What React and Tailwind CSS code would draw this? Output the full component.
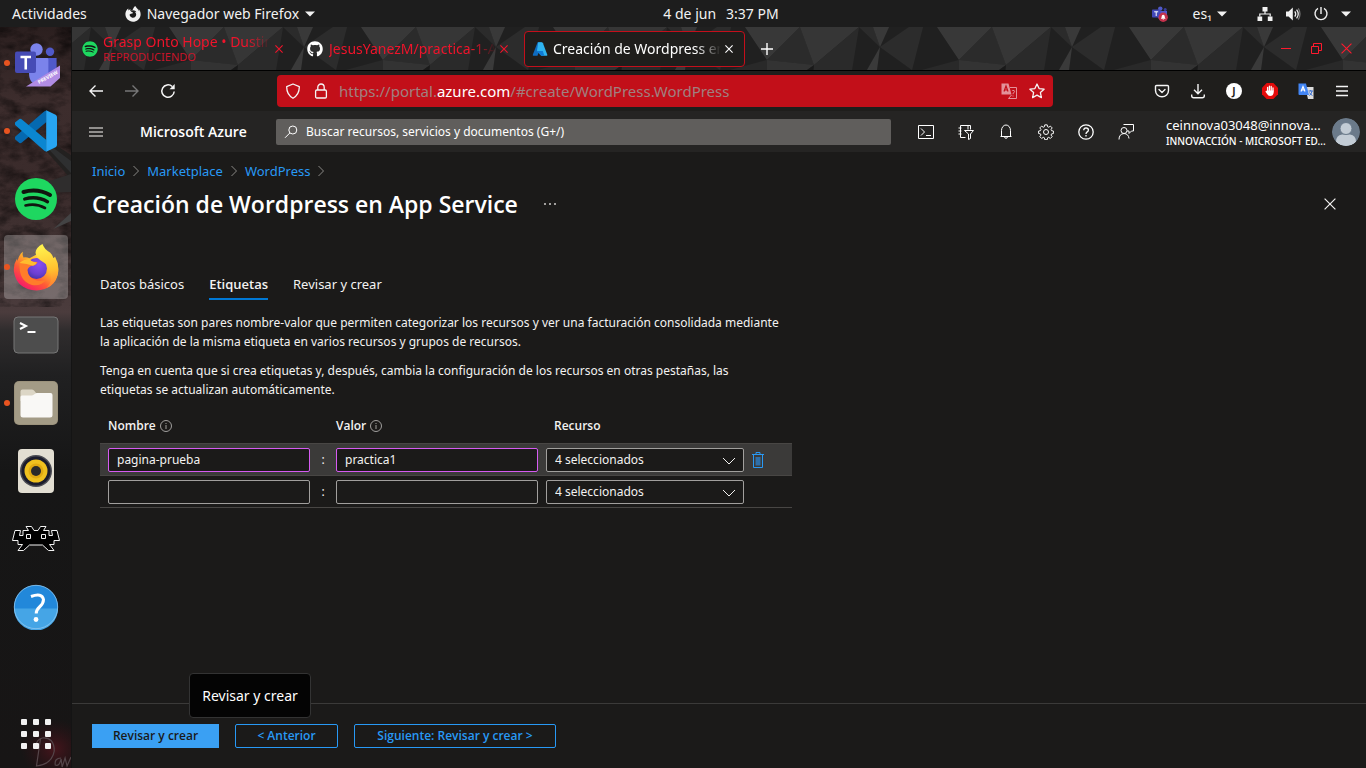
import React from "react";
import { FaFirefoxBrowser, FaGithub, FaSpotify } from "react-icons/fa";

/* ---------- small shared drawings ---------- */

function Svg({ w = 16, h = w, box, className = "", children, ...rest }) {
  return (
    <svg
      width={w}
      height={h}
      viewBox={box || `0 0 ${w} ${h}`}
      fill="none"
      stroke="currentColor"
      aria-hidden="true"
      className={`shrink-0 ${className}`}
      {...rest}
    >
      {children}
    </svg>
  );
}

const Caret = () => (
  <Svg w={10} h={6}>
    <path d="M0 0.5h10L5 5.5z" fill="currentColor" stroke="none" />
  </Svg>
);

const Cross = ({ size = 8, width = 1.1 }) => (
  <Svg w={size} box="0 0 8 8" strokeWidth={width}>
    <path d="M0.4 0.4l7.2 7.2M7.6 0.4L0.4 7.6" />
  </Svg>
);

const AzureLogo = () => (
  <Svg w={16} stroke="none">
    <path d="M5.6 1.2h4.1L5.5 14.8H1.4q-.9-.2-.6-1.1z" fill="#0f6cc0" />
    <path d="M9.6 1.2H6.2L5 9.4l4.5 5.4h5.3q.7-.2.5-1L11 2.2q-.4-1-1.4-1z" fill="#2fb4f0" />
    <path d="M4.5 10h6.3l1.5 4.8H9z" fill="#0f7bd6" />
  </Svg>
);

/* ---------- desktop top bar ---------- */

function TopBar() {
  return (
    <header className="grid h-[27px] shrink-0 grid-cols-[1fr_auto_1fr] items-center bg-[#1d1d1d] text-[14px] leading-5 text-[#f2f2f2]">
      <div className="flex items-center">
        <button className="ml-3">Actividades</button>
        <button className="ml-[38px] flex items-center gap-[6px]">
          <FaFirefoxBrowser size={16} />
          Navegador web Firefox
          <Caret />
        </button>
      </div>
      <button className="flex gap-[10px] pl-[76px]">
        <span>4 de jun</span>
        <span>3:37 PM</span>
      </button>
      <div className="flex items-center justify-end pr-[15px]">
        <button aria-label="Teams" className="mr-6">
          <Svg w={16} stroke="none">
            <circle cx="8.3" cy="2.6" r="2.2" fill="#5059c9" />
            <circle cx="13.2" cy="3.4" r="1.5" fill="#3a3f9e" />
            <path d="M5 5h10v5a5 5 0 01-9 2z" fill="#5059c9" />
            <rect y="3.6" width="8.4" height="8" rx="0.8" fill="#4248b8" />
            <path d="M2.2 5.8h4M4.2 5.8v4.2" stroke="#fff" strokeWidth="1" />
            <circle cx="11.2" cy="11.3" r="4.7" fill="#c4314b" />
            <path d="M8.8 12.7q.9-.8.9-2.4a1.5 1.5 0 013 0q0 1.6.9 2.4zM10.4 13.3h1.7l-.8.8z" fill="#fff" />
          </Svg>
        </button>
        <button className="mr-[30px] flex items-center gap-[5px]">
          es₁
          <Caret />
        </button>
        <button aria-label="Sistema" className="flex items-center gap-3">
          <Svg w={16} strokeWidth="1.2">
            <path d="M5.5 1h5v4.4h-5zM.5 10.6h4.7V15H.5zM10.8 10.6h4.7V15h-4.7z" fill="currentColor" stroke="none" />
            <path d="M8 5v3M2.8 10.6V8h10.4v2.6" />
          </Svg>
          <Svg w={16} strokeWidth="1.2">
            <path d="M1 5.4h2.6L7.8 1.6v12.8l-4.2-3.8H1z" fill="currentColor" stroke="none" />
            <path d="M9.8 5.4q1.9 2.6 0 5.2M11.6 3.6q3.3 4.4 0 8.8" />
            <path d="M13.3 2.4q3.4 5.6 0 11.2" stroke="#777" />
          </Svg>
          <Svg w={16} strokeWidth="1.4">
            <path d="M8 1v7M5 2.4a6 6 0 106 0" />
          </Svg>
          <Caret />
        </button>
      </div>
    </header>
  );
}

/* ---------- dock ---------- */

const TeamsIcon = () => (
  <Svg w={48} stroke="none">
    <circle cx="24.5" cy="10.5" r="6.2" fill="#7b83eb" />
    <circle cx="38" cy="12.8" r="4.2" fill="#5059c9" />
    <path d="M31 19h13.6v14q0 8-8.6 8h-5z" fill="#5059c9" />
    <path d="M18 19h17q1.4 0 1.4 1.4V34q0 11.5-9.4 11.5-10 0-10-11.5z" fill="#7b83eb" />
    <rect x="3" y="12.5" width="21" height="21.5" rx="2" fill="#464bb5" />
    <path d="M8.500 18h10.500M13.750 18v12.500" stroke="#fff" strokeWidth="2.600" />
    <path d="M48 26.5V39l-9.5 8.5H14z" fill="#b18ce4" />
    <text x="27" y="45" transform="rotate(-29 27 45)" fontSize="5" fontWeight="700" fill="#fff">PREVIEW</text>
  </Svg>
);

const CodeIcon = () => (
  <Svg w={42} stroke="none">
    <path d="M0 29.2L4.4 33q1.2.6 2.2-.2L31.4 12V.4Q30 .6 28.8 1.8L.4 26.600q-.9 1.200-.400 2.600z" fill="#0569b0" />
    <path d="M0 12.6L4.4 9q1.200-.6 2.200.2L31.400 30v11.600q-1.400-.2-2.600-1.400L.4 15.200q-.9-1.200-.400-2.600z" fill="#0b86d0" />
    <path d="M31.200.2L40.600 4.700Q42 5.500 42 7v28q0 1.500-1.400 2.300L31.200 41.800z" fill="#27a5f2" />
  </Svg>
);

const SpotifyIcon = () => (
  <Svg w={42} strokeLinecap="round" stroke="#10160f">
    <circle cx="21" cy="21" r="21" fill="#1ed760" stroke="none" />
    <path d="M8.500 14q14-4 26.500 3" strokeWidth="4" />
    <path d="M9.700 21q12-3.500 22.800 2.700" strokeWidth="3.300" />
    <path d="M10.500 27.500q10.500-2.700 19.500 2.500" strokeWidth="2.600" />
  </Svg>
);

const FirefoxIcon = () => (
  <Svg w={46} h={48} stroke="none">
    <defs>
      <linearGradient id="ffBody" x1="0.85" y1="0.1" x2="0.2" y2="0.95">
        <stop offset="0" stopColor="#fff44f" />
        <stop offset="0.35" stopColor="#ffb52b" />
        <stop offset="0.65" stopColor="#ff5a36" />
        <stop offset="1" stopColor="#f5156c" />
      </linearGradient>
      <radialGradient id="ffGlobe" cx="0.6" cy="0.3" r="0.8">
        <stop offset="0" stopColor="#8a4df2" />
        <stop offset="0.6" stopColor="#6b3fd0" />
        <stop offset="1" stopColor="#3a2f9e" />
      </radialGradient>
      <linearGradient id="ffTail" x1="0.5" y1="0" x2="0.6" y2="1">
        <stop offset="0" stopColor="#fff44f" />
        <stop offset="0.6" stopColor="#ffc02e" />
        <stop offset="1" stopColor="#ff7a33" />
      </linearGradient>
    </defs>
    <path d="M10 8.500q-1 3 .500 6 3-.500 6 .800L30 8l12 8q4 6 3 14Q41.500 46.500 23.500 47.500 4 46.500 1 29q-1-7 3-13.500l.500 2.500Q6 11.500 10 8.500z" fill="url(#ffBody)" />
    <circle cx="23.500" cy="25.500" r="10.500" fill="url(#ffGlobe)" />
    <path d="M29.500 1Q31 6 37 9.500q3 3 3.500 6l1.500-2q5 9 2.500 19-2.500 9-11 12.500 7-7 4-17-2-6-7.500-9-7-4-7.500-9.500.500-5 7-8.500z" fill="url(#ffTail)" />
    <path d="M6.500 20q-1 18 12.500 22 9 1.500 14-5-4 1-9 .5-9-2.500-9.500-10.500 1-4 5.500-4.500 3-.2 4.500-3.500L20 18.800q-2.500-.8-3-2.800-5.500-.5-10.500 4z" fill="#ff7d2a" />
    <path d="M6.500 20q5-4.500 10.500-4 .500 2 3 2.800l3.500.700q0 2-3.500 3.300-6-2-13.500-2.800z" fill="#ffbd2e" />
  </Svg>
);

const TerminalIcon = () => (
  <Svg w={46} h={38} stroke="none">
    <rect x="1" y="1" width="44" height="36" rx="4" fill="#4d4d4d" stroke="#777" strokeWidth="1" />
    <path d="M7 7l6 3-6 3M14.500 16h8" stroke="#fff" strokeWidth="2" />
  </Svg>
);

const FilesIcon = () => (
  <Svg w={44} stroke="none">
    <rect width="44" height="44" rx="5" fill="#9b927c" />
    <rect x="1" y="1" width="42" height="42" rx="4" fill="#a39b86" />
    <path d="M6.500 20V10.500Q6.500 8.500 8.500 8.500h9.500q1.500 0 2.500 1.500l1.500 2V20z" fill="#dcd6c6" />
    <path d="M6.500 16q0-1.500 1.500-1.500h9.500q1.500 0 2.500-1t2.500-1.500h14q2 0 2 2V34q0 2.500-2.500 2.500H9q-2.500 0-2.500-2.500z" fill="#f9f8f6" />
  </Svg>
);

const MusicIcon = () => (
  <Svg w={38} h={46} stroke="none">
    <rect x="1" y="1" width="36" height="44" rx="4" fill="#e2ded2" />
    <circle cx="19" cy="23" r="16" fill="#4a4b52" />
    <circle cx="19" cy="23" r="14.500" fill="#1b1c2c" />
    <circle cx="19" cy="23" r="11.500" fill="#efc01f" />
    <circle cx="19" cy="23" r="7.500" fill="#e0a912" />
    <circle cx="19" cy="23" r="5" fill="#2a2a2a" />
  </Svg>
);

const RetroIcon = () => (
  <Svg w={48} h={26} stroke="#f2f2f2" strokeWidth="1">
    <path
      fill="#000"
      d="M14 .5h5.500l2.500 4h4l2.500-4H34l-2.500 4H37v5h3.500l-1-5H45l2.500 10H42v4h-4.500l4.500 6h-5.500l-6-5.500h-13l-6 5.500H6l4.500-6H6v-4H.5L3 4.500h5.500l-1 5H11v-5h5.500z"
    />
    <path d="M14.500 8.500h4v4h-4zM29.500 8.500h4v4h-4z" />
  </Svg>
);

const HelpIcon = () => (
  <Svg w={46} stroke="none">
    <circle cx="23" cy="23" r="22" fill="#2288da" />
    <path d="M1 24.500h44A22 22 0 011 24.500z" fill="#45a5e6" />
    <circle cx="23" cy="23" r="21.700" stroke="#8fc8f0" strokeWidth="0.800" />
    <path d="M18 12.500q11-4 12.500 3 0 4-4 7.500-3.300 3-3.300 6.500" stroke="#fff" strokeWidth="3" />
    <circle cx="23" cy="35.500" r="2.400" fill="#fff" />
  </Svg>
);

const dockApps = [
  { name: "Microsoft Teams", icon: <TeamsIcon />, running: true },
  { name: "Visual Studio Code", icon: <CodeIcon />, running: true },
  { name: "Spotify", icon: <SpotifyIcon /> },
  { name: "Firefox", icon: <FirefoxIcon />, running: true, active: true },
  { name: "Terminal", icon: <TerminalIcon /> },
  { name: "Archivos", icon: <FilesIcon />, running: true },
  { name: "Rhythmbox", icon: <MusicIcon /> },
  { name: "RetroArch", icon: <RetroIcon /> },
  { name: "Ayuda", icon: <HelpIcon /> },
];

function DockWallpaper() {
  return (
    <svg className="absolute inset-0 h-full w-full" viewBox="0 0 72 741" preserveAspectRatio="none" aria-hidden="true">
      <defs>
        <linearGradient id="wall" x1="0" y1="0" x2="0" y2="1">
          <stop offset="0" stopColor="#2b1f1f" />
          <stop offset="0.1" stopColor="#3d2d2d" />
          <stop offset="0.22" stopColor="#3a2b2b" />
          <stop offset="0.32" stopColor="#453636" />
          <stop offset="0.385" stopColor="#4b3c3d" />
          <stop offset="0.41" stopColor="#2f2c2d" />
          <stop offset="0.47" stopColor="#202021" />
          <stop offset="0.6" stopColor="#161616" />
          <stop offset="1" stopColor="#171515" />
        </linearGradient>
        <filter id="rock" x="0" y="0" width="1" height="1">
          <feTurbulence type="fractalNoise" baseFrequency="0.05 0.09" numOctaves="5" seed="4" />
          <feColorMatrix values="0 0 0 0 0  0 0 0 0 0  0 0 0 0 0  1.2 0 0 0 -0.45" />
        </filter>
        <radialGradient id="glow">
          <stop offset="0" stopColor="#5a1620" stopOpacity="0.7" />
          <stop offset="1" stopColor="#3a0d14" stopOpacity="0" />
        </radialGradient>
      </defs>
      <rect width="72" height="741" fill="url(#wall)" />
      <rect width="72" height="280" filter="url(#rock)" />
      <path d="M22 96l50 32v24z" fill="#232120" />
      <path d="M34 106l38 28v12z" fill="#2e2f30" />
      <path d="M10 167l62-20v18z" fill="#2f2d2d" />
      <path d="M54 202l18-16v8z" fill="#434344" />
      <ellipse cx="55" cy="722" rx="34" ry="30" fill="url(#glow)" />
      <g fill="none" stroke="#55464a" strokeWidth="1.2">
        <path d="M41 712l-4 27q16-2 18-15 0-14-12-13-6 1-7 9" />
        <path d="M62 731q-7 0-6 7 4 2 6-6l1 8 3-9 2 8 4-9" />
      </g>
    </svg>
  );
}

function Dock() {
  return (
    <nav aria-label="Aplicaciones" className="relative flex w-[71px] shrink-0 flex-col items-center justify-between overflow-hidden pt-1 pb-[19px]">
      <DockWallpaper />
      <ul className="relative flex w-full flex-col items-center gap-1">
        {dockApps.map((app) => (
          <li key={app.name} className="relative pl-px">
            <button
              aria-label={app.name}
              className={`flex h-16 w-16 items-center justify-center rounded-[4px] ${app.active ? "bg-white/25" : ""}`}
            >
              {app.icon}
            </button>
            {app.running && <span className="absolute top-[29px] left-[1px] h-[6px] w-[6px] rounded-full bg-[#e95420]" />}
          </li>
        ))}
      </ul>
      <button aria-label="Mostrar aplicaciones" className="relative grid grid-cols-3 gap-[6px]">
        {Array.from({ length: 9 }, (_, i) => (
          <span key={i} className="h-[6px] w-[6px] rounded-[1px] bg-[#f2f2f2]" />
        ))}
      </button>
    </nav>
  );
}

/* ---------- browser chrome ---------- */

function TabStripArt() {
  return (
    <svg className="absolute inset-0 h-full w-full" aria-hidden="true">
      <defs>
        <pattern id="poly" width="192" height="43" patternUnits="userSpaceOnUse" patternTransform="translate(-73 0)">
          <rect width="192" height="43" fill="#202020" />
          <path d="M-22 0h55L0 33zM170 0h55l-33 33z" fill="#383838" />
          <path d="M33 0l14 38L0 33z" fill="#2b2b2b" />
          <path d="M33 0h59L47 38z" fill="#363636" />
          <path d="M92 0L47 38l5 5h33zM47 38v5h6z" fill="#2a2a2a" />
          <path d="M0 33l47 5-7 5H0z" fill="#333" />
          <path d="M47 38l-7 5h6z" fill="#1a1a1a" />
          <path d="M113 20l-13 23h10z" fill="#3a3a3a" />
          <path d="M92 0h14l7 20z" fill="#2b2b2b" />
          <path d="M106 0h16l-9 20z" fill="#393939" />
          <path d="M142 0h14l-11 43-32-23z" fill="#2c2c2c" />
          <path d="M192 33v10h-37z" fill="#292929" />
        </pattern>
      </defs>
      <rect width="100%" height="100%" fill="url(#poly)" />
    </svg>
  );
}

function TabStrip() {
  return (
    <div className="relative flex h-[44px] shrink-0 items-center justify-between border-b border-black">
      <TabStripArt />
      <div className="relative flex items-center gap-1 pl-[2px] text-[14px] leading-5 text-[#f0142b]">
        <div className="flex h-9 w-[221px] items-center pr-3 pl-2">
          <span className="flex h-4 w-4 shrink-0 items-center justify-center rounded-full bg-[#111]">
            <FaSpotify size={16} color="#1ed760" />
          </span>
          <button className="ml-[5px] min-w-0 flex-1 overflow-hidden text-left whitespace-nowrap">
            <span className="block overflow-hidden mask-r-from-85% leading-[17px]">Grasp Onto Hope • Dustin</span>
            <span className="block text-[11px] leading-[14px] text-[#c8142a]">REPRODUCIENDO</span>
          </button>
          <button aria-label="Cerrar pestaña" className="ml-1"><Cross /></button>
        </div>
        <div className="flex h-9 w-[221px] items-center pr-3 pl-2">
          <FaGithub size={16} color="#fff" className="shrink-0" />
          <button className="ml-[6px] min-w-0 flex-1 overflow-hidden mask-r-from-85% text-left whitespace-nowrap">
            JesusYanezM/practica-1-A
          </button>
          <button aria-label="Cerrar pestaña" className="ml-1"><Cross /></button>
        </div>
        <div className="flex h-9 w-[221px] items-center rounded-[4px] border border-[#c50f1b] bg-[#1f1e1c] pr-[11px] pl-[7px] text-white">
          <AzureLogo />
          <button className="ml-[5px] min-w-0 flex-1 overflow-hidden mask-r-from-85% text-left whitespace-nowrap">
            Creación de Wordpress en App
          </button>
          <button aria-label="Cerrar pestaña" className="ml-1"><Cross /></button>
        </div>
        <button aria-label="Nueva pestaña" className="ml-3 text-white">
          <Svg w={12} strokeWidth="1.400"><path d="M6 0v12M0 6h12" /></Svg>
        </button>
      </div>
      <div className="relative flex items-center gap-[19px] pr-[14px] text-[#ff1a2e]">
        <button aria-label="Minimizar"><Svg w={11}><path d="M0 5.500h10" /></Svg></button>
        <button aria-label="Restaurar"><Svg w={11}><path d="M.500 3.500h7v7h-7zM2.500 3v-2.500h8v7H8" /></Svg></button>
        <button aria-label="Cerrar ventana"><Cross size={11} width={0.8} /></button>
      </div>
    </div>
  );
}

function Toolbar() {
  return (
    <div className="flex h-10 shrink-0 items-center bg-[#1f1e1c] text-[#f5f5f5]">
      <div className="flex w-[205px] shrink-0 items-center gap-5 pl-4">
        <button aria-label="Atrás"><Svg w={16} strokeWidth="1.400"><path d="M15 8H2M7.500 2.500L2 8l5.500 5.500" /></Svg></button>
        <button aria-label="Adelante" className="text-[#777]"><Svg w={16} strokeWidth="1.400"><path d="M1 8h13M8.500 2.500L14 8l-5.500 5.500" /></Svg></button>
        <button aria-label="Recargar">
          <Svg w={16} strokeWidth="1.500">
            <path d="M14.200 8.500a6.200 6.200 0 11-2-5" />
            <path d="M14.700 1v5.200H9.500z" fill="currentColor" stroke="none" />
          </Svg>
        </button>
      </div>
      <div className="flex h-8 min-w-0 flex-1 items-center rounded-[4px] bg-[#c20f19] px-2">
        <Svg w={16} strokeWidth="1.300"><path d="M8 1l6.300 2.600q.2 8-6.300 11.700Q1.500 11.600 1.700 3.600z" strokeLinejoin="round" /></Svg>
        <Svg w={16} strokeWidth="1.300" className="ml-3">
          <rect x="2.600" y="7" width="10.800" height="8" rx="1.200" />
          <path d="M4.800 7V4.200a3.200 3.200 0 016.400 0V7" />
        </Svg>
        <a href="#url" className="ml-[10px] flex-1 truncate text-[15px] leading-5 text-[#a08080]">
          https://portal.<span className="text-white">azure.com</span>/#create/WordPress.WordPress
        </a>
        <button aria-label="Traducir" className="text-[#e3929a]">
          <Svg w={16}>
            <path d="M.500.500h7l3 11h-10z" fill="currentColor" stroke="none" />
            <path d="M3 8.500l2-5.500 2 5.500M3.700 7h2.700" stroke="#c20f19" strokeWidth="1.200" />
            <path d="M9 4.500h6.500v11h-8l3-3.500" />
            <path d="M11.300 7.500q2.500-.500 2.300 1.200-.3 1-1.500 1.500v1M12 12.500v1" />
          </Svg>
        </button>
        <button aria-label="Marcador" className="ml-3">
          <Svg w={16} strokeWidth="1.300" strokeLinejoin="round">
            <path d="M8 1l2.100 4.600 5 .6-3.700 3.400 1 5L8 12.100l-4.400 2.500 1-5L.900 6.200l5-.6z" />
          </Svg>
        </button>
      </div>
      <div className="flex w-[313px] shrink-0 items-center justify-end gap-5 pr-4">
        <button aria-label="Pocket">
          <Svg w={16} strokeWidth="1.400" strokeLinejoin="round">
            <path d="M2.500 2.500h11q1 0 1 1v4a6.500 6.300 0 01-13 0v-4q0-1 1-1z" />
            <path d="M5 6.500l3 3 3-3" strokeLinecap="round" />
          </Svg>
        </button>
        <button aria-label="Descargas">
          <Svg w={16} strokeWidth="1.400"><path d="M8 1v9.500M4 6.800l4 4 4-4M1.700 11.500v1.200q0 2 2 2h8.600q2 0 2-2v-1.200" /></Svg>
        </button>
        <button aria-label="Cuenta" className="flex h-4 w-4 items-center justify-center rounded-full bg-white text-[10px] font-bold text-[#1f1e1c]">J</button>
        <button aria-label="Bloqueador de anuncios">
          <Svg w={16} stroke="none">
            <path d="M4.700 0h6.600L16 4.700v6.600L11.300 16H4.700L0 11.300V4.700z" fill="#e30b0b" />
            <path d="M5.600 8V4.500M7.400 8V3.200M9.200 8V3.500M11 8V5" stroke="#fff" strokeWidth="1.300" strokeLinecap="round" />
            <path d="M5 7.500h6.700v2q-.4 3.500-3.600 3.500-2 0-3-2L3.300 8.600l.8-.6z" fill="#fff" />
          </Svg>
        </button>
        <button aria-label="Traductor">
          <Svg w={16} stroke="none">
            <path d="M7 4h8.500v12H10z" fill="#dcdcdc" />
            <path d="M10.500 8h4.500M12.700 7v1M11.300 12.500q2.500-1.500 2.700-4.500M11.500 9.500q1 2 3 3" stroke="#3a6fd0" />
            <path d="M.500.500h7.500l3 11.500H1.500q-1 0-1-1z" fill="#4285f4" />
            <path d="M3 8.500L5 3.500l2 5M3.700 7h2.600" stroke="#fff" strokeWidth="1.200" />
          </Svg>
        </button>
        <button aria-label="Menú">
          <Svg w={16} strokeWidth="1.400"><path d="M2 3.500h12M2 8h12M2 12.500h12" /></Svg>
        </button>
      </div>
    </div>
  );
}

/* ---------- Azure portal ---------- */

const headerActions = [
  ["Cloud Shell", <Svg key="i" w={16}><path d="M.500 1.500h15v13H.500zM3 4.500L6.500 8 3 11.500M8 11.500h5" /></Svg>],
  ["Directorios y suscripciones", (
    <Svg key="i" w={16}>
      <path d="M7.500 13.500h-5V1.500h10v4M10 1.500v4M.500 4h3M.500 7h3M.500 10h3M6.500 6.500h9L12.500 10v4.500l-2 1V10z" />
    </Svg>
  )],
  ["Notificaciones", <Svg key="i" w={16}><path d="M2.500 12.500h11M3.500 12.500V6.500a4.500 5.500 0 019 0v6M6.500 12.500a1.500 1.800 0 003 0" /></Svg>],
  ["Configuración", (
    <Svg key="i" w={16}>
      <path d="M6.700.600h2.600l.4 2 1.200.5 1.700-1.200 1.900 1.900-1.200 1.700.5 1.200 2 .4v2.600l-2 .4-.5 1.200 1.200 1.700-1.900 1.900-1.700-1.200-1.200.5-.4 2H6.700l-.4-2-1.200-.5-1.700 1.200-1.900-1.900 1.200-1.700-.5-1.200-2-.4V7.100l2-.4.5-1.200-1.200-1.700 1.900-1.900 1.700 1.200 1.200-.5z" transform="translate(.4 .3) scale(.95)" />
      <circle cx="8" cy="8" r="2.500" />
    </Svg>
  )],
  ["Ayuda", (
    <Svg key="i" w={16} strokeWidth="1.300">
      <circle cx="8" cy="8" r="7.200" />
      <path d="M5.700 6.200q.200-2.300 2.300-2.300 2.400.1 2.400 2 0 1.200-1.200 2-1.200.8-1.200 2" />
      <path d="M8 11v1.500" />
    </Svg>
  )],
  ["Comentarios", (
    <Svg key="i" w={16}>
      <circle cx="6" cy="6.500" r="3" />
      <path d="M1 15.500q0-5.500 5-6 4.500.3 5 5M5.500.500h10v6.500h-2L11 9.500V7H9" />
    </Svg>
  )],
];

function AzureHeader() {
  return (
    <header className="flex h-[41px] shrink-0 items-center bg-[#252423] text-white">
      <button aria-label="Mostrar menú" className="ml-[17px] text-[#b5b3b1]">
        <Svg w={14} h={12} strokeWidth="1.500"><path d="M0 2h14M0 6h14M0 10h14" /></Svg>
      </button>
      <a href="#inicio" className="ml-[37px] w-[136px] shrink-0 font-['Open_Sans'] text-[14px] leading-5 font-semibold">Microsoft Azure</a>
      <label className="flex h-[26px] min-w-0 flex-1 items-center gap-2 rounded-[2px] bg-[#605e5c] px-2">
        <Svg w={14} strokeWidth="1"><circle cx="8.800" cy="5" r="4" /><path d="M5.800 8L1 12.800" /></Svg>
        <input
          aria-label="Buscar recursos, servicios y documentos"
          placeholder="Buscar recursos, servicios y documentos (G+/)"
          className="w-full bg-transparent text-[12px] outline-none placeholder:text-white"
        />
      </label>
      <div className="ml-[27px] flex items-center gap-6">
        {headerActions.map(([name, icon]) => (
          <button key={name} aria-label={name}>{icon}</button>
        ))}
      </div>
      <button className="ml-8 flex items-center gap-2 pr-[6px] text-left">
        <span className="w-[158px] pt-[2px] whitespace-nowrap">
          <span className="block text-[13px] leading-4">ceinnova03048@innova...</span>
          <span className="block text-[10px] leading-4 font-medium">INNOVACCIÓN - MICROSOFT ED...</span>
        </span>
        <Svg w={28} stroke="none" className="rounded-full">
          <circle cx="14" cy="14" r="14" fill="#6b7a8a" />
          <path d="M4 24q0-7 6-7.500h8q6 .5 6 7.500-4 4-10 4T4 24z" fill="#c3ccd5" />
          <circle cx="14" cy="10.500" r="6" fill="#c3ccd5" stroke="#6b7a8a" />
        </Svg>
      </button>
    </header>
  );
}

const Chevron = () => (
  <Svg w={6} h={12} className="text-[#8a8886]"><path d="M.500 1l5 5-5 5" /></Svg>
);

function Breadcrumb() {
  return (
    <nav aria-label="Ruta" className="flex items-center text-[13px] leading-5 text-[#2899f5]">
      {["Inicio", "Marketplace", "WordPress"].map((item) => (
        <span key={item} className="flex items-center">
          <a href={`#${item}`}>{item}</a>
          <span className="px-2"><Chevron /></span>
        </span>
      ))}
    </nav>
  );
}

const Info = () => (
  <Svg w={12} className="text-[#a19f9d]">
    <circle cx="6" cy="6" r="5.500" />
    <path d="M6 5v4M6 3v1" />
  </Svg>
);

function ResourceSelect({ id }) {
  return (
    <div className="relative w-[198px]">
      <select
        id={id}
        aria-label="Recurso"
        className="block h-6 w-full appearance-none rounded-[2px] border border-[#a19f9d] bg-[#1b1a19] pl-2 text-[12px] text-[#f3f2f1] outline-none"
      >
        <option>4 seleccionados</option>
      </select>
      <Svg w={14} h={8} className="pointer-events-none absolute top-[9px] right-2 text-[#f3f2f1]">
        <path d="M1 1l6 6 6-6" />
      </Svg>
    </div>
  );
}

function TagsTable() {
  const rows = [
    { name: "pagina-prueba", value: "practica1", filled: true },
    { name: "", value: "", filled: false },
  ];
  const field = "block h-6 w-[202px] rounded-[2px] border bg-[#1b1a19] px-2 text-[12px] text-[#f3f2f1] outline-none";
  const head = "font-['Open_Sans'] font-semibold";
  return (
    <table className="mt-[10px] w-full table-fixed border-collapse text-[12px] leading-4 text-[#f3f2f1]">
      <colgroup>
        <col className="w-[210px]" />
        <col className="w-[26px]" />
        <col className="w-[202px]" />
        <col className="w-[206px]" />
        <col />
      </colgroup>
      <thead>
        <tr className="h-[34px] text-left">
          <th className={`${head} pl-2`}><span className="flex items-center gap-1">Nombre <Info /></span></th>
          <td />
          <th className={head}><span className="flex items-center gap-1">Valor <Info /></span></th>
          <th className={`${head} pl-4`}>Recurso</th>
          <td />
        </tr>
      </thead>
      <tbody>
        {rows.map((row, i) => (
          <tr key={i} className={`h-8 border-b border-[#484644] ${row.filled ? "border-t bg-[#3b3a39]" : ""}`}>
            <td className="pt-px pl-2">
              <input aria-label="Nombre" defaultValue={row.name} className={`${field} ${row.filled ? "border-[#d65bf2]" : "border-[#a19f9d]"}`} />
            </td>
            <td className="pt-px text-center">:</td>
            <td className="pt-px">
              <input aria-label="Valor" defaultValue={row.value} className={`${field} ${row.filled ? "border-[#d65bf2]" : "border-[#a19f9d]"}`} />
            </td>
            <td className="pt-px pl-2"><ResourceSelect id={`resource-${i}`} /></td>
            <td className="pt-px pl-2">
              {row.filled && (
                <button aria-label="Eliminar" className="block text-[#2899f5]">
                  <Svg w={12} h={16}>
                    <path d="M0 2.500h12M4 2.500v-2h4v2" />
                    <path d="M1.500 3v12.500h9V3" />
                    <path d="M3.500 5h5v8.500h-5z" fill="#2f6fa8" stroke="none" />
                  </Svg>
                </button>
              )}
            </td>
          </tr>
        ))}
      </tbody>
    </table>
  );
}

function Portal() {
  const tab = "h-[26px] border-b-2 pb-[6px]";
  return (
    <>
      <main className="flex-1 px-5 pt-[9px] text-[#f3f2f1]">
        <Breadcrumb />
        <div className="mt-[7px] flex items-center">
          <h1 className="font-['Open_Sans'] text-[23px] leading-8 font-semibold text-white">Creación de Wordpress en App Service</h1>
          <button aria-label="Más" className="ml-[26px]">
            <Svg w={12} h={2} stroke="none">
              <path d="M0 0h2v2H0zM5 0h2v2H5zM10 0h2v2h-2z" fill="#a19f9d" />
            </Svg>
          </button>
          <button aria-label="Cerrar" className="mr-[10px] ml-auto"><Cross size={12} width={0.8} /></button>
        </div>
        <div className="mt-[54px] max-w-[700px] pl-2">
          <div role="tablist" className="flex gap-[25px] text-[13px] leading-5">
            <button role="tab" className={`${tab} border-transparent`}>Datos básicos</button>
            <button role="tab" aria-selected="true" className={`${tab} border-[#0078d4] font-['Open_Sans'] font-semibold`}>Etiquetas</button>
            <button role="tab" className={`${tab} border-transparent`}>Revisar y crear</button>
          </div>
          <div className="mt-[13px] max-w-[680px] space-y-[10px] text-[12px] leading-[19px]">
            <p>
              Las etiquetas son pares nombre-valor que permiten categorizar los recursos y ver una facturación consolidada mediante
              la aplicación de la misma etiqueta en varios recursos y grupos de recursos.
            </p>
            <p>
              Tenga en cuenta que si crea etiquetas y, después, cambia la configuración de los recursos en otras pestañas, las
              etiquetas se actualizan automáticamente.
            </p>
          </div>
          <TagsTable />
        </div>
      </main>
      <footer className="flex h-[65px] shrink-0 items-center gap-4 border-t border-[#3b3a39] px-5 font-['Open_Sans'] text-[12px] font-semibold text-[#2899f5]">
        <div className="relative">
          <button className="block h-6 w-[127px] bg-[#3aa0f3] text-[#1b1a19]">Revisar y crear</button>
          <div role="tooltip" className="absolute bottom-[30px] left-[97px] flex h-[45px] w-[122px] items-center justify-center rounded-[4px] border border-[#333] bg-[#040404] font-['Noto_Sans'] text-[14px] font-normal whitespace-nowrap text-white">
            Revisar y crear
          </div>
        </div>
        <button className="h-6 w-[103px] rounded-[2px] border border-[#2899f5]">&lt; Anterior</button>
        <button className="h-6 w-[202px] rounded-[2px] border border-[#2899f5]">Siguiente: Revisar y crear &gt;</button>
      </footer>
    </>
  );
}

export default function App() {
  return (
    <div className="flex min-h-screen flex-col bg-[#1b1a19] font-['Noto_Sans','Open_Sans',sans-serif]">
      <TopBar />
      <div className="flex flex-1">
        <Dock />
        <div className="flex min-w-0 flex-1 flex-col border-l border-[#141414]">
          <TabStrip />
          <Toolbar />
          <AzureHeader />
          <Portal />
        </div>
      </div>
    </div>
  );
}
